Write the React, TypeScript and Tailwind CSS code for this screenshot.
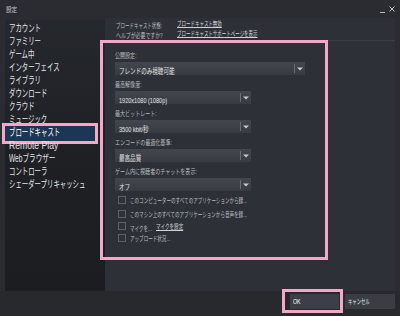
import React from 'react';

const sidebarItems: { label: string; scale: string }[] = [
  { label: 'アカウント', scale: 'scale-x-[0.64]' },
  { label: 'ファミリー', scale: 'scale-x-[0.64]' },
  { label: 'ゲーム中', scale: 'scale-x-[0.64]' },
  { label: 'インターフェイス', scale: 'scale-x-[0.64]' },
  { label: 'ライブラリ', scale: 'scale-x-[0.64]' },
  { label: 'ダウンロード', scale: 'scale-x-[0.64]' },
  { label: 'クラウド', scale: 'scale-x-[0.64]' },
  { label: 'ミュージック', scale: 'scale-x-[0.64]' },
  { label: 'ブロードキャスト', scale: 'scale-x-[0.64]' },
  { label: 'Remote Play', scale: 'scale-x-[0.86]' },
  { label: 'Webブラウザー', scale: 'scale-x-[0.66]' },
  { label: 'コントローラ', scale: 'scale-x-[0.64]' },
  { label: 'シェーダープリキャッシュ', scale: 'scale-x-[0.64]' },
];

function Caret() {
  return (
    <svg width="6" height="4" viewBox="0 0 6 4">
      <path d="M0 0.5h6L3 3.6z" fill="#c6c9cc" />
    </svg>
  );
}

function Select({ value, wide }: { value: string; wide?: boolean }) {
  return (
    <div
      className={`${wide ? 'w-[190px]' : 'w-[136px]'} h-[13px] flex items-center bg-gradient-to-b from-[#43464d] to-[#383b41]`}
    >
      <div className="flex-1 pl-[4px] overflow-hidden">
        <span className="inline-block origin-left scale-x-[0.74] whitespace-nowrap text-[7.5px] leading-none text-[#e2e3e5]">
          {value}
        </span>
      </div>
      <div className="w-px h-[9px] bg-[#6b6e74]" />
      <div className="w-[10px] flex justify-center">
        <Caret />
      </div>
    </div>
  );
}

function Field({ label, value, wide }: { label: string; value: string; wide?: boolean }) {
  return (
    <div className="mb-[4px]">
      <div className="h-[10px] mb-[2px] flex items-center">
        <span className="inline-block origin-left scale-x-[0.72] whitespace-nowrap text-[7px] leading-none text-[#b6b9bd]">
          {label}
        </span>
      </div>
      <Select value={value} wide={wide} />
    </div>
  );
}

function Check({ children, className = '' }: { children: React.ReactNode; className?: string }) {
  return (
    <div className={`h-[12px] flex items-center ${className}`}>
      <div className="w-[8px] h-[8px] ml-[3px] border border-[#5d6066] bg-[#2f3237] shrink-0" />
      <div className="ml-[4px] flex items-center">{children}</div>
    </div>
  );
}

function Small({ children }: { children: React.ReactNode }) {
  return (
    <span className="inline-block origin-left scale-x-[0.65] whitespace-nowrap text-[7px] leading-none text-[#b9bcc0]">
      {children}
    </span>
  );
}

export default function App() {
  return (
    <div className="w-[400px] h-[316px] bg-[#2a2c31] flex flex-col overflow-hidden font-['Liberation_Sans','Noto_Sans_CJK_JP',sans-serif]">
      {/* title bar */}
      <div className="h-[18px] flex items-center justify-between pl-[6px] pr-[5px]">
        <span className="inline-block origin-left scale-x-[0.8] whitespace-nowrap text-[7px] leading-none text-[#c4c6c9]">
          設定
        </span>
        <div className="flex items-center gap-[4px]">
          <svg width="5" height="8" viewBox="0 0 5 8">
            <path d="M0 7.5h5" stroke="#b8babd" strokeWidth="1" />
          </svg>
          <svg width="6" height="6" viewBox="0 0 6 6">
            <path d="M0.5 0.5l5 5M5.5 0.5l-5 5" stroke="#c2c4c7" strokeWidth="1" />
          </svg>
        </div>
      </div>

      {/* body */}
      <div className="flex-1 flex px-[5px] min-h-0">
        <aside className="w-[100px] mt-[2px] bg-gradient-to-b from-[#25282d] via-[#1e2024] to-[#1b1d21] pt-[2.5px]">
          {sidebarItems.map((it) =>
            it.label === 'ブロードキャスト' ? (
              <div key={it.label} className="relative h-[15px] -my-px mr-[10px] bg-[#1c3756] flex items-center pl-[4px]">
                <span className={`inline-block origin-left ${it.scale} whitespace-nowrap text-[10px] leading-none text-white`}>
                  {it.label}
                </span>
                <div className="absolute -left-[3px] -right-[3px] -top-[3px] -bottom-[3px] border-[3px] border-[#f4a8c8]" />
              </div>
            ) : (
              <div key={it.label} className="h-[13px] flex items-center pl-[4px]">
                <span className={`inline-block origin-left ${it.scale} whitespace-nowrap text-[10px] leading-none text-[#e3e4e6]`}>
                  {it.label}
                </span>
              </div>
            ),
          )}
        </aside>

        <main className="flex-1 flex flex-col bg-[#2d3036]">
          <div className="h-[22px] pl-[11px]">
            <div className="h-[10px] flex items-center">
              <div className="w-[61px]">
                <span className="inline-block origin-left scale-x-[0.64] whitespace-nowrap text-[7px] leading-none text-[#b8bbbf]">
                  ブロードキャスト状態:
                </span>
              </div>
              <span className="inline-block origin-left scale-x-[0.64] whitespace-nowrap text-[7px] leading-none text-[#d0d2d5] underline">
                ブロードキャスト無効
              </span>
            </div>
            <div className="h-[10px] flex items-center">
              <div className="w-[61px]">
                <span className="inline-block origin-left scale-x-[0.7] whitespace-nowrap text-[7px] leading-none text-[#b8bbbf]">
                  ヘルプが必要ですか?
                </span>
              </div>
              <span className="inline-block origin-left scale-x-[0.64] whitespace-nowrap text-[7px] leading-none text-[#d0d2d5] underline">
                ブロードキャストサポートページを表示
              </span>
            </div>
          </div>

          <div className="border-t border-[#3b3e44] flex-1">
            <section className="-mt-px -ml-[5px] w-[228px] h-[220px] border-[3px] border-[#f4a8c8] pl-[12px] pt-[7px]">
              <Field label="公開設定:" value="フレンドのみ視聴可能" wide />
              <Field label="最高解像度:" value="1920x1080 (1080p)" />
              <Field label="最大ビットレート:" value="3500 kbit/秒" />
              <Field label="エンコードの最適化基準:" value="最高品質" />
              <Field label="ゲーム内に視聴者のチャットを表示:" value="オフ" />

              <Check className="-mt-[1px]">
                <Small>このコンピューターのすべてのアプリケーションから録...</Small>
              </Check>
              <Check className="mt-[2px]">
                <Small>このマシン上のすべてのアプリケーションから音声を録...</Small>
              </Check>
              <Check>
                <div className="w-[26px]">
                  <Small>マイクを...</Small>
                </div>
                <span className="inline-block origin-left scale-x-[0.65] whitespace-nowrap text-[7px] leading-none text-[#d0d2d5] underline">
                  マイクを設定
                </span>
              </Check>
              <Check>
                <Small>アップロード状況...</Small>
              </Check>
            </section>
          </div>
        </main>
      </div>

      {/* footer */}
      <div className="h-[25px] flex justify-end items-start pt-[3px] pr-[5px] gap-[6px] bg-[#27292d]">
        <div className="relative w-[49px] h-[15px] bg-[#3c3f47] flex items-center pl-[3px]">
          <span className="inline-block origin-left scale-x-[0.75] whitespace-nowrap text-[7px] leading-none text-white">
            OK
          </span>
          <div className="absolute -left-[8px] -right-[4px] -top-[5px] -bottom-[4px] border-[3px] border-[#f4a8c8]" />
        </div>
        <div className="w-[50px] h-[15px] bg-[#3a3d44] flex items-center pl-[3px]">
          <span className="inline-block origin-left scale-x-[0.62] whitespace-nowrap text-[7px] leading-none text-[#e6e7e8]">
            キャンセル
          </span>
        </div>
      </div>
    </div>
  );
}
